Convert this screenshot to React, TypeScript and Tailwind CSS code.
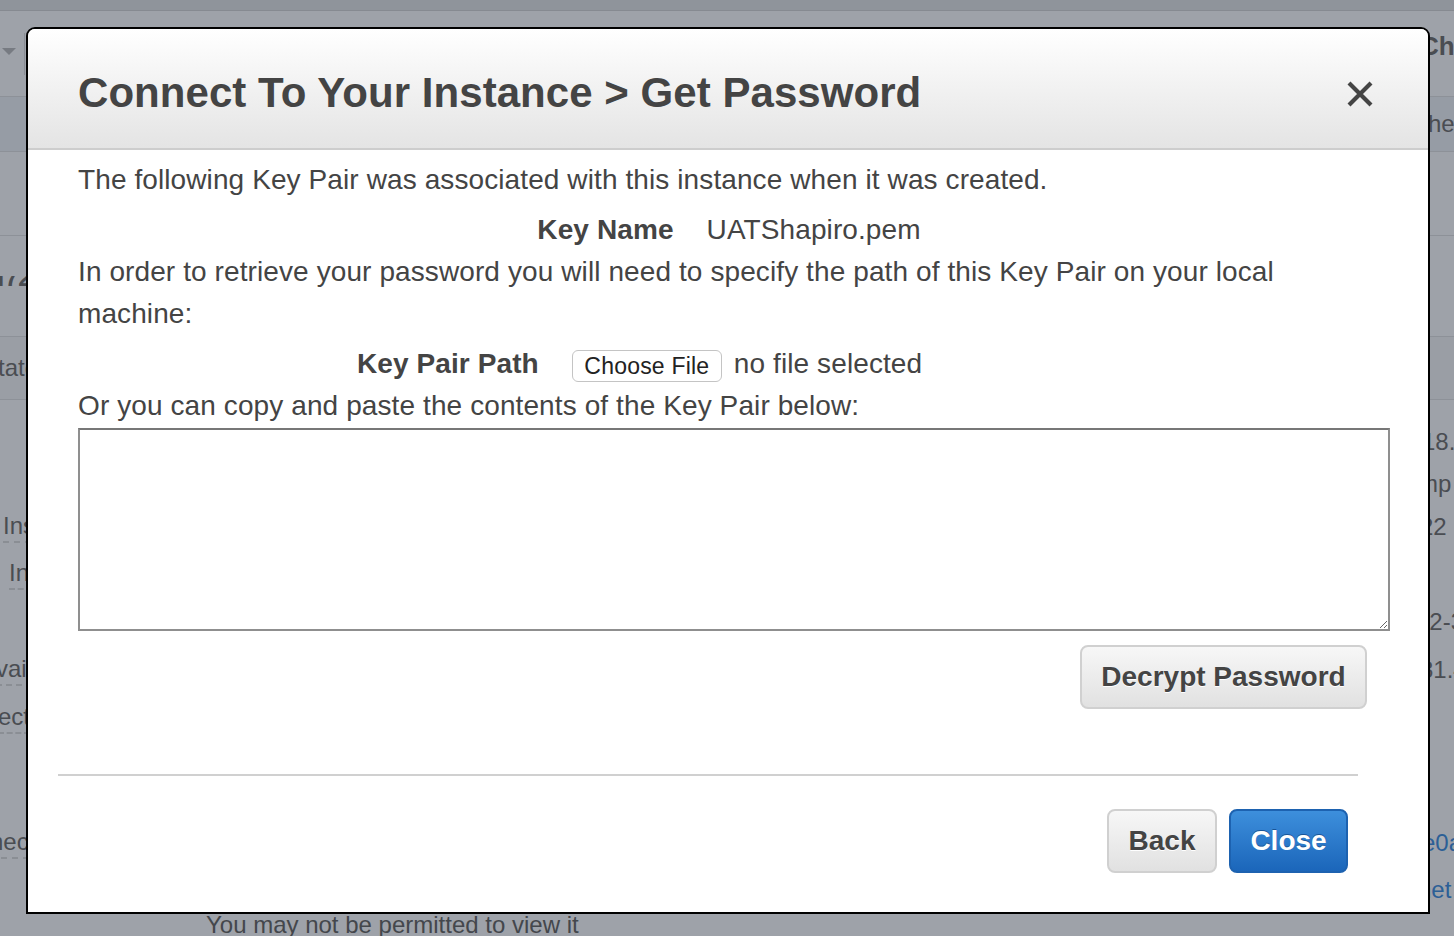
import React from "react";

function BgRow({
  h,
  left,
  right,
  className = "",
}: {
  h: string;
  left?: React.ReactNode;
  right?: React.ReactNode;
  className?: string;
}) {
  return (
    <div className={`flex items-center justify-between ${h} ${className}`}>
      <div className="flex items-center overflow-hidden w-[40px] shrink-0">{left}</div>
      <div className="flex items-center overflow-hidden w-[40px] shrink-0 whitespace-nowrap">{right}</div>
    </div>
  );
}

function Dashed({ children, className = "" }: { children: React.ReactNode; className?: string }) {
  return (
    <span className={`border-b-2 border-dashed border-[#8a8e94] leading-[30px] whitespace-nowrap ${className}`}>
      {children}
    </span>
  );
}

export default function App() {
  return (
    <div className="relative w-[1454px] h-[936px] overflow-hidden bg-[#9ea2a9] font-['Liberation_Sans',Arial,sans-serif] text-[24px] text-[#4a4d52]">
      {/* dimmed page behind the dialog */}
      <div className="flex flex-col">
        <div className="h-[11px] bg-[#8f949b] border-b border-[#868a91]" />
        <BgRow
          h="h-[86px]"
          className="border-b border-[#8d9198]"
          left={
            <div className="flex items-center h-[86px]">
              <svg width="14" height="8" viewBox="0 0 14 8" className="ml-[2px] mb-[4px]">
                <path d="M0 0 L14 0 L7 7 Z" fill="#777b82" />
              </svg>
              <div className="ml-[8px] w-[1px] h-[42px] bg-[#8a8e95]" />
            </div>
          }
          right={<span className="font-bold text-[26px] mb-[14px] ml-[6px]">Check</span>}
        />
        <BgRow
          h="h-[55px]"
          className="bg-[#969ca5] border-b border-[#8d9198]"
          right={<span className="ml-[2px]">che</span>}
        />
        <div className="h-[84px] border-b border-[#8d9198]" />
        <BgRow
          h="h-[101px]"
          className="border-b border-[#8d9198]"
          left={<span className="font-bold -ml-[3px] mt-[-16px] whitespace-nowrap">f72a</span>}
        />
        <BgRow
          h="h-[63px]"
          className="bg-[#9a9ea5] border-b border-[#8d9198]"
          left={<span className="-ml-[2px] whitespace-nowrap">tate</span>}
        />
        <div className="h-[21px]" />
        <BgRow h="h-[42px]" right={<span className="ml-[8px]">18.2</span>} />
        <BgRow h="h-[42px]" right={<span className="ml-[4px]">mp</span>} />
        <BgRow
          h="h-[44px]"
          left={<Dashed className="ml-[3px]">Inst</Dashed>}
          right={<span className="ml-[6px]">22</span>}
        />
        <BgRow h="h-[50px]" left={<Dashed className="ml-[9px]">Ins</Dashed>} />
        <BgRow h="h-[46px]" right={<span className="ml-[2px]">72-3</span>} />
        <BgRow
          h="h-[50px]"
          left={<Dashed className="-ml-[4px]">vail</Dashed>}
          right={<span className="ml-[6px]">31.4</span>}
        />
        <BgRow h="h-[46px]" left={<Dashed className="-ml-[2px]">ect</Dashed>} />
        <div className="h-[78px]" />
        <BgRow
          h="h-[48px]"
          left={<Dashed className="-ml-[10px]">hec</Dashed>}
          right={<span className="text-[#2c5f96] ml-[8px]">e0a</span>}
        />
        <BgRow h="h-[46px]" right={<span className="text-[#2c5f96] ml-[4px]">net</span>} />
        <div className="pl-[206px] -mt-[2px] leading-[28px] text-[#44474c]">You may not be permitted to view it</div>
      </div>

      {/* dialog */}
      <div className="absolute left-[26px] top-[27px] w-[1404px] h-[887px] bg-white border-2 border-black rounded-t-[9px] overflow-hidden flex flex-col text-[#444]">
        <div className="h-[121px] shrink-0 flex items-center justify-between bg-gradient-to-b from-[#ffffff] to-[#e4e4e4] border-b-2 border-[#cdcdcd] pl-[50px] pr-[54px] pt-[8px]">
          <h1 className="text-[42px] font-bold leading-none text-[#444] tracking-[0.05px]">
            Connect To Your Instance &gt; Get Password
          </h1>
          <svg width="28" height="28" viewBox="0 0 28 28" className="mt-[2px]">
            <path d="M3 3 L25 25 M25 3 L3 25" stroke="#444" strokeWidth="4.2" strokeLinecap="butt" />
          </svg>
        </div>

        <div className="flex flex-col pl-[50px] pr-[38px] pt-[9px] text-[28px] leading-[42px] tracking-[0.1px]">
          <p>The following Key Pair was associated with this instance when it was created.</p>
          <div className="mt-[8px] flex justify-center gap-[33px] pr-[10px]">
            <span className="font-bold">Key Name</span>
            <span>UATShapiro.pem</span>
          </div>
          <p>
            In order to retrieve your password you will need to specify the path of this Key Pair on your local
            <br />
            machine:
          </p>
          <div className="mt-[8px] flex items-center ml-[279px] h-[42px]">
            <span className="font-bold">Key Pair Path</span>
            <span className="ml-[33px] mt-[4px] h-[32px] w-[150px] flex items-center justify-center rounded-[6px] border border-[#c4c4c4] bg-white text-[23px] leading-none text-[#222] tracking-[0.2px]">
              Choose File
            </span>
            <span className="ml-[12px]">no file selected</span>
          </div>
          <p>Or you can copy and paste the contents of the Key Pair below:</p>
          <textarea
            className="block mt-[1px] w-[1312px] h-[203px] border-2 border-[#8f8f8f] border-t-[#777] bg-white outline-none"
            defaultValue=""
          />
          <div className="flex justify-end mt-[14px] mr-[23px]">
            <button className="h-[64px] w-[287px] rounded-[8px] border-2 border-[#d0d0d0] bg-gradient-to-b from-[#f7f7f7] to-[#e1e1e1] text-[28px] font-bold text-[#444] leading-none tracking-normal [text-shadow:0_1px_0_#fff]">
              Decrypt Password
            </button>
          </div>
        </div>

        <div className="mt-[65px] ml-[30px] w-[1300px] h-[2px] bg-[#d0d0d0]" />

        <div className="flex justify-end gap-[12px] mt-[33px] mr-[80px]">
          <button className="h-[64px] w-[110px] rounded-[8px] border-2 border-[#d0d0d0] bg-gradient-to-b from-[#f7f7f7] to-[#e1e1e1] text-[28px] font-bold text-[#444] leading-none [text-shadow:0_1px_0_#fff]">
            Back
          </button>
          <button className="h-[64px] w-[119px] rounded-[8px] border-2 border-[#1d62b0] bg-gradient-to-b from-[#3d8fdc] to-[#1b66ba] text-[28px] font-bold text-white leading-none [text-shadow:0_-1px_0_#1a5597]">
            Close
          </button>
        </div>
      </div>
    </div>
  );
}
